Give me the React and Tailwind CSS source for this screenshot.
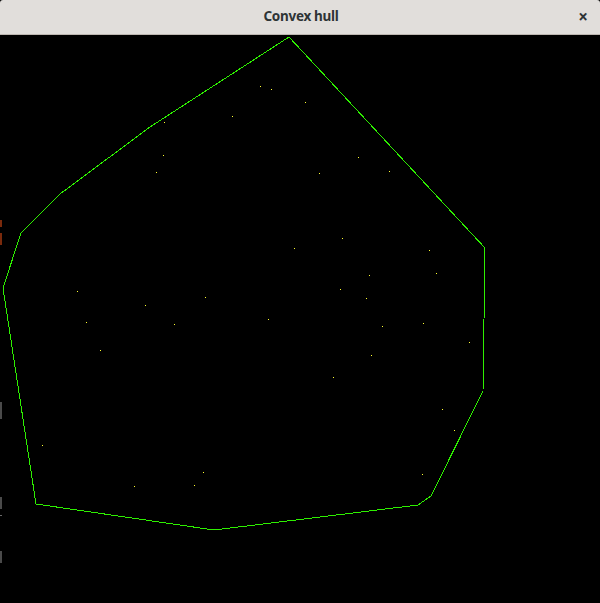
// Convex hull window: title bar + canvas with points and hull
const POINTS = [
  [260, 86], [271, 89], [305, 102], [232, 116], [164, 122], [163, 155],
  [156, 172], [319, 173], [358, 157], [389, 171], [342, 238], [294, 248],
  [429, 250], [369, 275], [436, 273], [340, 289], [366, 298], [268, 319],
  [382, 326], [423, 323], [469, 342], [371, 355], [333, 377], [442, 409],
  [454, 430], [422, 474], [77, 291], [145, 305], [205, 297], [86, 322],
  [174, 324], [100, 350], [42, 445], [203, 472], [134, 486], [194, 485],
];

const HULL = [
  [289, 37], [150, 127], [60, 194], [21, 233], [3, 288], [36, 504],
  [214, 530], [418, 505], [431, 496], [483, 391], [485, 248],
];

// bits of other windows peeking at the left edge
const EDGE = [
  { y: 220, h: 7, c: "#7a2a0c" },
  { y: 233, h: 12, c: "#7a2a0c" },
  { y: 402, h: 17, c: "#4a4a4a" },
  { y: 497, h: 12, c: "#4a4a4a" },
  { y: 515, h: 1, c: "#6a6a6a" },
  { y: 551, h: 12, c: "#4a4a4a" },
];

export default function App() {
  return (
    <div className="w-[600px] h-[603px] bg-black flex flex-col overflow-hidden">
      <div className="h-[35px] shrink-0 grid grid-cols-[1fr_auto_1fr] items-center bg-[#e1dedb] border-b border-[#bdb7b1] rounded-t-[3px] text-[#2e3436] font-['Noto_Sans',sans-serif]">
        <div />
        <div className="text-[13.5px] font-bold tracking-[-0.3px] pl-[2px] -mt-[1px]">Convex hull</div>
        <div className="flex justify-end pr-[12px]">
          <span className="text-[17px] font-bold leading-none -mt-[1px]">×</span>
        </div>
      </div>
      <svg
        className="block"
        width="600"
        height="568"
        viewBox="0 35 600 568"
        shapeRendering="crispEdges"
      >
        <rect x="0" y="35" width="600" height="568" fill="#000" />
        {EDGE.map((e, i) => (
          <rect key={i} x="0" y={e.y} width="2" height={e.h} fill={e.c} />
        ))}
        <polygon
          points={HULL.map((p) => p.join(",")).join(" ")}
          fill="none"
          stroke="#2ef000"
          strokeWidth="1"
        />
        {POINTS.map(([x, y], i) => (
          <rect key={i} x={x} y={y} width="1" height="1" fill="#ffff30" />
        ))}
      </svg>
    </div>
  );
}
